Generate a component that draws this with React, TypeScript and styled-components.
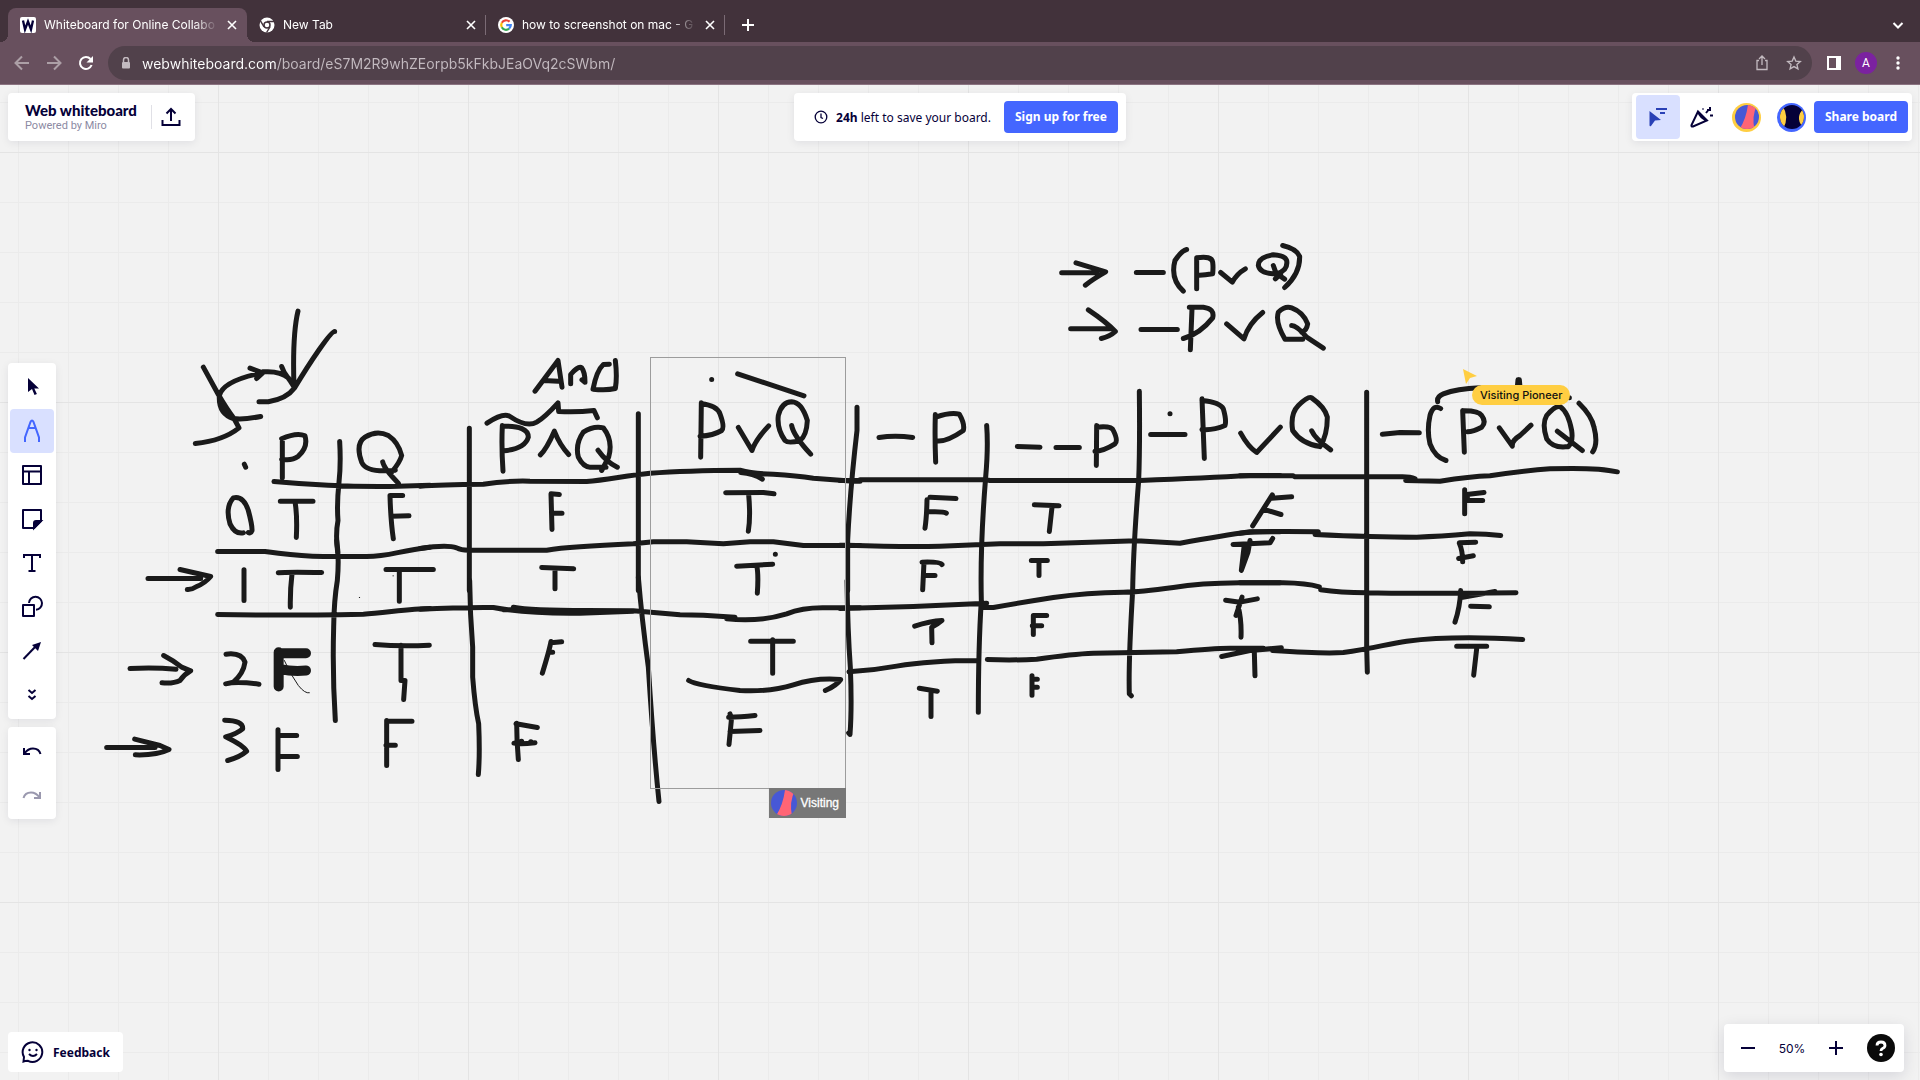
import React from "react";
import styled, { createGlobalStyle, css } from "styled-components";

const color = {
  strip: "#42323b",
  chrome: "#68505e",
  field: "#51414b",
  ink: "#1a1a1a",
  navy: "#050038",
  blue: "#4466ff",
  pale: "#d9e0ff",
};
const ui = `"Noto Sans", "Open Sans", sans-serif`;
const system = `Inter, Roboto, sans-serif`;

const GlobalStyle = createGlobalStyle`
  * { box-sizing: border-box; }
  body { margin: 0; font-family: ${ui}; color: ${color.navy}; }
  button, input { font: inherit; color: inherit; border: 0; padding: 0; margin: 0; background: none; }
  button { cursor: pointer; }
  svg { display: block; flex: none; }
`;

const Page = styled.div`
  display: flex;
  flex-direction: column;
  min-height: 100vh;
`;

/* ---------- Browser chrome ---------- */

const TabStrip = styled.nav`
  display: flex;
  align-items: flex-end;
  height: 42px;
  padding: 0 12px 0 8px;
  background: ${color.strip};
  color: #fff;
  font: 12px ${system};
`;

const Tab = styled.div<{ $active?: boolean; $divided?: boolean }>`
  position: relative;
  display: flex;
  align-items: center;
  width: 239px;
  height: 34px;
  padding: 0 9px 0 12px;
  border-radius: 8px 8px 0 0;
  ${(p) =>
    p.$active &&
    css`
      background: ${color.chrome};
      &::before,
      &::after {
        content: "";
        position: absolute;
        bottom: 0;
        width: 8px;
        height: 8px;
      }
      &::before {
        left: -8px;
        background: radial-gradient(circle at 0 0, transparent 8px, ${color.chrome} 8px);
      }
      &::after {
        right: -8px;
        background: radial-gradient(circle at 100% 0, transparent 8px, ${color.chrome} 8px);
      }
    `}
  ${(p) =>
    p.$divided &&
    css`
      &::after {
        content: "";
        position: absolute;
        right: 0;
        top: 7px;
        width: 1px;
        height: 20px;
        background: #7b6b75;
      }
    `}
`;

const TabTitle = styled.button`
  display: flex;
  flex: 1;
  align-items: center;
  gap: 8px;
  min-width: 0;
  text-align: left;
  span {
    flex: 1;
    overflow: hidden;
    white-space: nowrap;
    line-height: 20px;
    mask-image: linear-gradient(to right, #000 calc(100% - 24px), transparent);
  }
`;

const Plain = styled.button`
  display: grid;
  place-items: center;
  flex: none;
`;

const Close = styled(Plain)`
  width: 12px;
  height: 12px;
  margin-left: 8px;
`;

const NewTab = styled(Plain)`
  width: 28px;
  height: 34px;
  margin-left: 9px;
`;

const TabMenu = styled(Plain)`
  width: 20px;
  height: 34px;
  margin-left: auto;
`;

const AddressBar = styled.div`
  display: flex;
  align-items: center;
  height: 43px;
  padding: 0 6px;
  background: ${color.chrome};
  border-bottom: 1px solid #8b7381;
  color: #fff;
`;

const NavButton = styled(Plain)<{ $dim?: boolean }>`
  width: 32px;
  height: 32px;
  opacity: ${(p) => (p.$dim ? 0.45 : 1)};
`;

const Field = styled.label`
  display: flex;
  align-items: center;
  flex: 1;
  height: 34px;
  margin: 0 6px;
  padding: 0 2px 0 12px;
  border-radius: 17px;
  background: ${color.field};
`;

const Url = styled.input`
  flex: 1;
  height: 24px;
  margin-left: 10px;
  outline: 0;
  font: 14px ${system};
  color: transparent;
  background: linear-gradient(to right, #fff 134px, #c3bac0 134px);
  background-clip: text;
  -webkit-background-clip: text;
`;

const Profile = styled.button`
  width: 22px;
  height: 22px;
  margin: 0 5px;
  border-radius: 50%;
  background: #7b22a0;
  color: #fff;
  font: 12px/22px Roboto, sans-serif;
`;

/* ---------- Board ---------- */

const Board = styled.main`
  position: relative;
  display: flex;
  flex-direction: column;
  flex: 1;
  padding: 8px;
  overflow: hidden;
  background-color: #f2f2f2;
  background-image: linear-gradient(to right, #e4e4e4 1px, transparent 1px),
    linear-gradient(to bottom, #e4e4e4 1px, transparent 1px),
    linear-gradient(to right, #ebebeb 1px, transparent 1px),
    linear-gradient(to bottom, #ebebeb 1px, transparent 1px);
  background-size: 250px 250px, 250px 250px, 50px 50px, 50px 50px;
  background-position: 218px 0, 0 67px, 18px 0, 0 17px;
`;

const Ink = styled.svg`
  position: absolute;
  inset: 0;
  width: 100%;
  height: 100%;
  fill: none;
  stroke: ${color.ink};
  stroke-linecap: round;
  stroke-linejoin: round;
`;

const Frame = styled.section`
  position: absolute;
  left: 650px;
  top: 272px;
  width: 196px;
  height: 432px;
  border: 1px solid #9c9c9c;
`;

const FrameOwner = styled.div`
  position: absolute;
  right: -1px;
  top: 100%;
  display: flex;
  align-items: center;
  gap: 4px;
  height: 30px;
  padding: 0 7px 0 2px;
  background: #777;
  color: #fff;
  font: 12px "Liberation Sans", Arial, sans-serif;
  -webkit-text-stroke: 0.3px #fff;
`;

const Guest = styled.div`
  position: absolute;
  left: 1463px;
  top: 284px;
`;

const GuestName = styled.span`
  display: block;
  margin-left: 9px;
  padding: 0 8px;
  border-radius: 10px;
  background: #ffce42;
  color: #111;
  font: 500 11px/20px ${system};
  white-space: nowrap;
`;

const TopRow = styled.header`
  position: relative;
  display: grid;
  grid-template-columns: 1fr auto 1fr;
`;

const Panel = styled.div`
  display: flex;
  align-items: center;
  height: 48px;
  border-radius: 4px;
  background: #fff;
  box-shadow: 0 2px 8px rgba(5, 0, 56, 0.08);
`;

const BrandPanel = styled(Panel)`
  justify-self: start;
  padding: 0 12px 0 17px;
`;

const Brand = styled.h1`
  margin: 0 14px 0 0;
  font: 900 15px/18px Lato, sans-serif;
  small {
    display: block;
    font: 11px/14px Roboto, sans-serif;
    color: #8c8aa3;
  }
`;

const Export = styled(Plain)`
  width: 32px;
  height: 24px;
  padding-left: 7px;
  border-left: 1px solid #e0e0e6;
`;

const Notice = styled(Panel)`
  padding: 0 8px 0 20px;
  font-size: 12px;
  p {
    margin: 0 13px 0 8px;
  }
`;

const Primary = styled.button`
  height: 32px;
  padding: 0 11px;
  border-radius: 4px;
  background: ${color.blue};
  color: #fff;
  font: 700 12px/32px ${ui};
  white-space: nowrap;
`;

const PeoplePanel = styled(Panel)`
  justify-self: end;
  padding: 0 4px;
`;

const Tool = styled(Plain)<{ $on?: boolean; $dim?: boolean }>`
  width: 44px;
  height: 44px;
  border-radius: 4px;
  background: ${(p) => (p.$on ? color.pale : "transparent")};
  opacity: ${(p) => (p.$dim ? 0.4 : 1)};
`;

const Rail = styled.aside`
  position: relative;
  display: flex;
  flex: 1;
  flex-direction: column;
  align-items: flex-start;
  justify-content: center;
  gap: 8px;
  padding-top: 16px;
`;

const ToolPanel = styled(Panel)`
  flex-direction: column;
  height: auto;
  padding: 2px;
`;

const BottomRow = styled.footer`
  position: relative;
  display: flex;
  align-items: flex-end;
  justify-content: space-between;
`;

const Feedback = styled.button`
  display: flex;
  align-items: center;
  gap: 8px;
  height: 40px;
  padding: 0 13px;
  border-radius: 4px;
  background: #fff;
  font: 700 12px ${ui};
`;

const ZoomPanel = styled(Panel)`
  margin-right: 8px;
  padding: 0 9px 0 2px;
  box-shadow: 0 4px 16px rgba(5, 0, 56, 0.12);
`;

const Level = styled.output`
  width: 44px;
  text-align: center;
  font: 12px ${system};
`;

const Help = styled(Plain)`
  margin-left: 9px;
`;

/* ---------- Icons ---------- */

type IconProps = { size?: number; box?: string; children: React.ReactNode; width?: number; stroke?: string };
const Icon = ({ size = 24, box = "0 0 24 24", width = 2, stroke = "currentColor", children }: IconProps) => (
  <svg width={size} height={size} viewBox={box} fill="none" stroke={stroke} strokeWidth={width} aria-hidden="true">
    {children}
  </svg>
);

const CloseIcon = () => (
  <Icon size={12} box="0 0 12 12" width={1.6}>
    <path d="M2 2l8 8M10 2l-8 8" />
  </Icon>
);

const WFavicon = () => (
  <svg width="16" height="16" viewBox="0 0 16 16" aria-hidden="true">
    <rect width="16" height="16" rx="2" fill="#fff" />
    <path d="M3 3.500L5 12.500L8 4.500L11 12.500L13 3.500" fill="none" stroke={color.navy} strokeWidth="2.300" />
  </svg>
);

const ChromeFavicon = () => (
  <svg width="16" height="16" viewBox="0 0 16 16" aria-hidden="true">
    <circle cx="8" cy="8" r="7.500" fill="#fff" />
    <circle cx="8" cy="8" r="3" fill="#fff" stroke={color.strip} strokeWidth="1.500" />
    <path d="M8 4.500h7M5 9.800L1.500 3.800M11 9.800L7.600 15.500" stroke={color.strip} strokeWidth="1.400" />
  </svg>
);

const GoogleFavicon = () => (
  <svg width="16" height="16" viewBox="0 0 16 16" fill="none" strokeWidth="2.200" aria-hidden="true">
    <circle cx="8" cy="8" r="8" fill="#fff" />
    <path d="M11.500 4.800A4.800 4.800 0 0 0 3.800 5.700" stroke="#ea4335" />
    <path d="M3.800 5.700A4.800 4.800 0 0 0 3.800 10.300" stroke="#fbbc05" />
    <path d="M3.800 10.300A4.800 4.800 0 0 0 11.100 11.700" stroke="#34a853" />
    <path d="M11.100 11.700A4.800 4.800 0 0 0 12.800 8.100H8.200" stroke="#4285f4" />
  </svg>
);

const VisitorFace = ({ size }: { size: number }) => (
  <svg width={size} height={size} viewBox="0 0 26 26" aria-hidden="true">
    <clipPath id={`face${size}`}>
      <circle cx="13" cy="13" r="13" />
    </clipPath>
    <g clipPath={`url(#face${size})`}>
      <path fill="#4758d6" d="M0 0h26v26H0z" />
      <path fill="#ff6575" d="M14 0h10Q18 12 21 26H5Q12 15 14 0z" />
    </g>
  </svg>
);

const OwnerFace = () => (
  <svg width="24" height="24" viewBox="0 0 24 24" aria-hidden="true">
    <clipPath id="owner">
      <circle cx="12" cy="12" r="12" />
    </clipPath>
    <g clipPath="url(#owner)">
      <path fill="#050038" d="M0 0h24v24H0z" />
      <path fill="#ffce42" d="M0 0h2Q10 12 3 24H0zM24 3Q15 12 22 21h2z" />
    </g>
  </svg>
);

const Ring = styled.button<{ $ring: string }>`
  display: grid;
  place-items: center;
  width: 29px;
  height: 29px;
  margin: 0 8px;
  border-radius: 50%;
  background: ${(p) => p.$ring};
`;

const tools = [
  {
    label: "Select",
    art: <path d="M8 3v14l4-3 2.500 6 2.400-1-2.600-5.500h4.700z" fill="currentColor" stroke="none" />,
  },
  {
    label: "Pen",
    on: true,
    art: <path d="M5 23v-4.500L10.500 3Q12 0 13.500 3L19 18.500V23M8.500 9h7" stroke={color.blue} />,
  },
  { label: "Templates", art: <path d="M3 3h18v18H3zM3 8.500h18M9 8.500V21" strokeLinejoin="round" /> },
  {
    label: "Sticky note",
    art: (
      <>
        <path d="M3 3h18v11l-7 7H3z" strokeLinejoin="round" />
        <path d="M21 14h-5q-2 0-2 2v5z" fill="currentColor" />
      </>
    ),
  },
  { label: "Text", art: <path d="M4 7V4h16v3M12 4v16M8.500 20h7" /> },
  {
    label: "Shapes",
    art: (
      <>
        <path d="M3 10h11v11H3z" strokeLinejoin="round" />
        <path d="M9 8a6.500 6.500 0 1 1 7 6.800" />
      </>
    ),
  },
  {
    label: "Connection line",
    art: (
      <>
        <path d="M3.500 20L16 7" />
        <path d="M21 3l-3 9-6-6z" fill="currentColor" stroke="none" />
      </>
    ),
  },
  { label: "More", art: <path d="M8.500 7l3.500 3 3.500-3M8.500 13l3.500 3 3.500-3" /> },
];

/* ---------- Hand-drawn strokes, three units to one board pixel ---------- */

const sketches = [
  {
    name: "Turning arrows and the P and Q headings",
    at: [90, 290],
    d: `M624 62C610 120 609 200 612 290M734 123C722 123 660 215 614 292M575 228Q580 245 594 262L614 290
      M340 230L385 312Q410 355 432 384L447 412Q400 450 316 459M480 233L518 247L500 264
      M518 247Q400 270 388 315Q385 370 430 384Q460 388 512 378M518 244Q570 240 595 262L614 292Q590 325 535 334H507
      M463 521L467 530M577 447V562M575 445Q620 425 645 436Q655 470 625 497Q605 512 575 506
      M749 453Q753 520 747 575Q740 640 744 690Q736 730 743 785
      M916 539Q830 548 815 515Q795 460 825 440Q860 418 895 435Q925 455 935 495Q930 515 905 545M878 514Q882 535 925 578
      M552 573Q740 590 900 588L1020 584
      M460 727Q435 732 420 700Q405 650 430 622Q460 615 475 660Q487 705 486 720Q482 730 475 726
      M571 632H669M616 640Q622 680 619 741M900 615H938M900 615Q902 690 910 745M905 677L957 676`,
  },
  {
    name: "Row numbers and the first two columns",
    at: [90, 540],
    d: `M174 114H332M270 87L362 108Q345 128 320 138Q305 148 292 147M462 88V180M565 97Q585 94 695 96M606 100Q600 150 601 200
      M383 33H525C600 42 620 47 700 48H830C900 48 920 32 1020 20M740 0Q748 50 742 120Q732 180 731 260Q727 400 736 540
      M888 87H1030M928 92V182M383 222Q560 226 820 221C880 218 960 204 1020 204
      M120 384Q190 380 258 386M221 345Q250 360 275 380L302 391Q285 400 270 420Q250 430 216 427
      M408 341Q455 335 465 365Q460 400 430 425L407 430Q440 422 507 431
      M855 312Q930 318 1018 314M933 314V420L945 420L941 477M50 621H195M134 596L210 615L237 627Q200 645 136 643
      M404 539Q460 540 458 565Q440 580 407 589Q460 615 470 632Q450 650 413 660
      M564 568V687M564 585H620M564 648H622M890 540V675M890 542H966M888 614H916`,
  },
  {
    name: "AND and OR headings",
    at: [420, 340],
    d: `M345 152L414 60L426 140M370 120L415 122M452 130V102Q475 75 485 82Q495 95 495 125L486 118M568 71L550 72Q530 90 519 146Q560 150 586 144Q592 110 586 60
      M201 248Q250 215 270 228Q320 262 350 245Q375 230 414 187L416 213Q470 216 522 210L532 232
      M247 255Q244 320 249 392M247 257Q325 255 325 290Q315 325 252 331M361 343Q380 325 403 272Q420 315 446 342
      M545 390L566 350Q580 300 550 262Q520 255 490 275Q465 310 475 350Q490 380 510 380H558M534 329Q560 365 592 380
      M875 117h.1M953 100L1152 166M844 187L842 350M844 190Q890 195 900 220Q915 260 905 270Q880 285 840 287
      M955 261L996 330Q1005 300 1046 256M1140 300Q1105 310 1095 300Q1070 265 1075 225Q1085 185 1115 184Q1145 185 1162 240Q1160 285 1140 300M1115 255Q1120 285 1172 341
      M148 263V750M655 220V750M0 437Q60 432 190 431Q260 420 330 422L500 423C560 418 620 405 690 398Q800 390 960 389Q1000 400 1060 401Q1130 405 1180 413L1300 422H1320M962 396Q1000 398 1027 416
      M0 624Q80 612 110 622Q125 630 150 629H380Q450 618 640 610L700 604H800L910 610L990 604H1060L1150 615H1320
      M393 460L396 567M393 460L418 462M398 518H426M917 457L1030 456L1062 460M986 462Q992 530 985 572
      M365 681L461 685M405 686V745M950 677L1058 671M1010 675Q1016 700 1012 758M1066 641h.1
      M1311 200V270Q1290 450 1283 600V750`,
  },
  {
    name: "Lower AND and OR cells",
    at: [420, 580],
    d: `M149 0Q150 100 158 200V290Q165 380 176 430Q180 520 175 582M655 -10Q665 110 685 260Q700 500 717 663
      M1281 0Q1283 150 1291 260Q1296 380 1290 462L1286 457M0 86Q120 80 220 81Q320 100 480 98L640 92
      M250 88H310M280 80Q330 90 500 90L640 91L780 103L850 104L945 110M920 115Q1020 125 1100 100Q1150 80 1220 82H1320
      M393 183Q388 210 367 278M393 187L425 184M390 215h8M290 428Q290 480 295 537M288 430L352 441M282 488Q300 492 345 487M304 482h1M332 484h1
      M992 182H1120M1058 178V278M806 300Q830 315 960 330Q1050 335 1120 313Q1190 290 1262 297Q1250 315 1216 330
      M930 400L934 420L927 492M926 410Q960 410 1005 405M930 453L1020 450`,
  },
  {
    name: "Negated P columns",
    at: [840, 380],
    d: `M117 171Q165 163 218 171M286 102Q284 170 287 245M288 110Q330 95 358 101Q375 130 370 150Q320 185 290 181
      M440 135Q445 200 437 290Q420 500 424 660Q415 800 415 995M532 198L600 200M648 201H718
      M770 135L769 255M770 140Q815 135 820 150Q835 180 825 190Q790 212 765 212
      M898 32Q900 200 896 300Q880 500 878 630Q865 850 868 940L874 946
      M990 100h.1M932 162H1035M1086 55L1093 234M1086 60Q1140 65 1150 85Q1160 120 1155 135Q1120 150 1086 147M1202 158Q1225 200 1250 216L1321 140
      M0 300H55L60 298H440L450 300H900Q1100 292 1230 285H1320M0 494H20Q200 500 300 497L480 490H610L890 481L1020 488Q1150 465 1230 454H1320
      M0 684Q150 680 220 678L440 668M424 681H460Q550 665 640 651Q740 636 850 635Q900 635 1000 621Q1080 608 1200 607H1320
      M27 874Q100 870 170 857Q270 840 415 840M442 837Q520 840 590 836Q700 820 760 818L1010 814Q1120 803 1170 803H1270
      M261 358Q260 410 255 443M270 350L348 354M265 394Q310 392 319 398M583 373L657 376M636 380L628 453
      M252 545L248 628M246 545Q300 543 306 552M252 585H285M574 540H622M597 542V585
      M224 737Q270 722 306 720Q295 730 275 740L276 787M580 705V762M580 705H620M577 736H605
      M238 923L292 932M273 935V1008M576 886V944M580 896h12M580 920h12
      M1179 492L1290 487L1298 474M1230 480L1224 515L1204 570L1212 500M1157 659L1200 665L1252 655M1206 650L1188 705M1195 680Q1205 720 1203 770
      M1145 828L1230 810L1324 802M1243 815L1245 886`,
  },
  {
    name: "Negated disjunction columns",
    at: [1240, 360],
    d: `M240 258Q185 250 158 210Q150 160 175 135Q205 105 215 112Q255 140 262 170Q262 225 240 258M215 211Q225 235 272 268
      M380 95V860L382 935M427 221L480 216L538 217M602 144Q580 130 570 165Q560 210 570 250Q585 290 618 300
      M668 150L673 275M668 151Q715 150 725 165Q740 185 725 200Q700 213 682 214M778 202L817 257Q815 240 840 225L873 194
      M985 258Q940 265 920 235Q905 190 920 165Q945 135 960 138Q985 155 995 210Q1000 245 985 258M952 212L1027 270
      M1017 128Q1055 165 1062 200Q1075 250 1058 274M593 124Q590 108 610 100Q650 85 720 82M834 58L832 80M838 58L840 80M988 112h.1
      M0 346H160L165 349H480Q510 348 525 355M497 360L600 362Q690 348 750 346Q850 330 930 325Q1070 320 1132 334
      M0 518Q80 510 235 514M225 522Q400 530 530 530Q600 528 690 520Q740 520 782 525
      M0 667H130Q200 668 238 679M242 688Q300 697 380 697Q500 700 828 697
      M98 870Q250 880 310 876C400 865 440 850 500 842Q640 825 848 837
      M97 403L38 496M95 413L155 409M70 446L123 462M674 388V460M680 402L732 396M678 420H728M682 402V418
      M658 548Q668 570 668 604M658 547L707 545M656 594L700 586M662 690Q660 740 645 785M664 711L765 693M692 737L748 739
      M650 857H740M710 865L701 944`,
  },
  {
    name: "Two formulas",
    at: [1040, 230],
    d: `M65 127H170M108 97L197 124Q160 145 136 164M289 126H370M440 57Q425 60 405 90Q390 145 430 182
      M470 175V82Q515 75 518 95Q520 110 518 130Q490 135 472 134M542 126L577 155Q590 130 616 115
      M740 90Q735 75 700 73Q655 80 655 105Q660 130 710 130Q745 120 740 90M700 105L708 128L734 146M706 145L722 130M728 45Q770 55 779 78Q780 130 734 171
      M92 295H212M145 238Q200 275 226 303Q210 318 184 324M303 297H412M456 235L451 358M448 230H490Q525 235 518 262Q480 310 430 324
      M560 280L612 325Q625 280 668 246M788 326H735Q705 275 715 245Q735 225 755 232Q790 245 803 280Q800 300 785 305M755 285Q770 285 800 320L850 353`,
  },
];

const BrowserTab = ({ icon, title, active, divided }: { icon: React.ReactNode; title: string; active?: boolean; divided?: boolean }) => (
  <Tab $active={active} $divided={divided}>
    <TabTitle>
      {icon}
      <span>{title}</span>
    </TabTitle>
    <Close aria-label={`Close ${title}`}>
      <CloseIcon />
    </Close>
  </Tab>
);

export default function App() {
  return (
    <Page>
      <GlobalStyle />
      <TabStrip>
        <BrowserTab icon={<WFavicon />} title="Whiteboard for Online Collabo" active />
        <BrowserTab icon={<ChromeFavicon />} title="New Tab" divided />
        <BrowserTab icon={<GoogleFavicon />} title="how to screenshot on mac - G" divided />
        <NewTab aria-label="New tab">
          <Icon size={14} box="0 0 14 14">
            <path d="M7 1v12M1 7h12" />
          </Icon>
        </NewTab>
        <TabMenu aria-label="Search tabs">
          <Icon size={12} box="0 0 12 12">
            <path d="M1.500 4L6 8.500 10.500 4" />
          </Icon>
        </TabMenu>
      </TabStrip>
      <AddressBar>
        <NavButton aria-label="Back" $dim>
          <Icon size={16} box="0 0 16 16">
            <path d="M15 8H2M8 1.500L1.500 8 8 14.500" />
          </Icon>
        </NavButton>
        <NavButton aria-label="Forward" $dim>
          <Icon size={16} box="0 0 16 16">
            <path d="M1 8h13M8 1.500L14.500 8 8 14.500" />
          </Icon>
        </NavButton>
        <NavButton aria-label="Reload">
          <Icon size={16} box="0 0 16 16">
            <path d="M13.600 10A6 6 0 1 1 12.500 4" />
            <path d="M15 1v6.500H8.500z" fill="currentColor" stroke="none" />
          </Icon>
        </NavButton>
        <Field aria-label="Address">
          <Icon size={12} box="0 0 12 12" stroke="#c3bac0" width={1.5}>
            <path d="M3.500 5V3a2.500 2.500 0 0 1 5 0v2" />
            <rect x="2" y="5" width="8" height="6.500" rx="1" fill="#c3bac0" stroke="none" />
          </Icon>
          <Url defaultValue="webwhiteboard.com/board/eS7M2R9whZEorpb5kFkbJEaOVq2cSWbm/" />
          <NavButton aria-label="Share page">
            <Icon size={16} box="0 0 16 16" stroke="#c3bac0" width={1.3}>
              <path d="M5 5.500H3v9h10v-9h-2M8 10V1.500M5 4l3-3 3 3" />
            </Icon>
          </NavButton>
          <NavButton aria-label="Bookmark">
            <Icon size={16} box="0 0 24 24" stroke="#c3bac0">
              <path d="M12 3l2.700 6.200 6.800.6-5.100 4.500 1.500 6.600-5.900-3.500-5.900 3.500 1.500-6.600-5.100-4.500 6.800-.6z" />
            </Icon>
          </NavButton>
        </Field>
        <NavButton aria-label="Side panel">
          <Icon size={14} box="0 0 14 14">
            <path d="M1 1h12v12H1z" />
            <path d="M9 0h5v14H9z" fill="currentColor" stroke="none" />
          </Icon>
        </NavButton>
        <Profile>A</Profile>
        <NavButton aria-label="Menu">
          <Icon size={16} box="0 0 16 16">
            <g fill="currentColor" stroke="none">
              <circle cx="8" cy="3" r="1.700" />
              <circle cx="8" cy="8" r="1.700" />
              <circle cx="8" cy="13" r="1.700" />
            </g>
          </Icon>
        </NavButton>
      </AddressBar>

      <Board>
        <Ink aria-label="Handwritten truth table">
          <g transform="translate(0 -84.5)">
            {sketches.map((s) => (
              <g key={s.name} transform={`translate(${s.at[0]} ${s.at[1]}) scale(0.33333)`}>
                <path d={s.d} strokeWidth="15" />
              </g>
            ))}
            <g transform="translate(90 540) scale(0.33333)">
              <path d="M566 438V335M570 338H648M570 386Q610 394 648 390" strokeWidth="30" />
              <path d="M583 360Q600 400 625 435Q645 460 658 457M808 171h1M909 106h1" strokeWidth="3" />
            </g>
          </g>
        </Ink>
        <Frame aria-label="Selected strokes">
          <FrameOwner>
            <VisitorFace size={26} />
            Visiting
          </FrameOwner>
        </Frame>
        <Guest>
          <svg width="14" height="16" viewBox="0 0 14 16" aria-hidden="true">
            <path d="M0 0l14 7-7 2-4 6z" fill="#ffce42" />
          </svg>
          <GuestName>Visiting Pioneer</GuestName>
        </Guest>

        <TopRow>
          <BrandPanel>
            <Brand>
              Web whiteboard
              <small>Powered by Miro</small>
            </Brand>
            <Export aria-label="Export">
              <Icon size={20} box="0 0 20 20">
                <path d="M1.500 13v5h17v-5M10 14V2.500M5.500 6.500L10 2l4.500 4.500" />
              </Icon>
            </Export>
          </BrandPanel>
          <Notice>
            <Icon size={14} box="0 0 14 14" width={1.3}>
              <circle cx="7" cy="7" r="5.800" />
              <path d="M7 3.500V7.500l2 1" />
            </Icon>
            <p>
              <b>24h</b> left to save your board.
            </p>
            <Primary>Sign up for free</Primary>
          </Notice>
          <PeoplePanel>
            <Tool $on aria-label="Collaborator cursors">
              <Icon stroke="#2a41b6">
                <path d="M3.500 6l11.500 9-6 .5L5 21Q3.500 22 3.500 20z" fill="#2a41b6" stroke="none" />
                <path d="M10 4h11M14 8h5" />
              </Icon>
            </Tool>
            <Tool aria-label="Reactions">
              <Icon>
                <path d="M8 6.500L1.500 20Q1 22 3 21.500L17 15.500zM8 6.500Q10 13 17 15.500M13 3.500v1M16 8l2-2.500M20 2v3h-3M20 10.500h3" />
              </Icon>
            </Tool>
            <Ring $ring="#ffce42" aria-label="Visiting Pioneer">
              <VisitorFace size={24} />
            </Ring>
            <Ring $ring={color.blue} aria-label="You">
              <OwnerFace />
            </Ring>
            <Primary>Share board</Primary>
          </PeoplePanel>
        </TopRow>

        <Rail aria-label="Tools">
          <ToolPanel>
            {tools.map((t) => (
              <Tool key={t.label} $on={t.on} aria-label={t.label}>
                <Icon>{t.art}</Icon>
              </Tool>
            ))}
          </ToolPanel>
          <ToolPanel>
            <Tool aria-label="Undo">
              <Icon>
                <path d="M4 9v6h6M4.500 14.500Q8 9.500 13 9.500 19 9.500 20.500 15" />
              </Icon>
            </Tool>
            <Tool aria-label="Redo" $dim>
              <Icon>
                <path d="M20 9v6h-6M19.500 14.500Q16 9.500 11 9.500 5 9.500 3.500 15" />
              </Icon>
            </Tool>
          </ToolPanel>
        </Rail>

        <BottomRow>
          <Feedback>
            <Icon>
              <path d="M4 21l-1.500.5L3 17A9.800 9.800 0 1 1 7 20.800L4 21z" />
              <path d="M8 14q4 4 8 0" />
              <circle cx="8.500" cy="10" r="1.200" fill="currentColor" stroke="none" />
              <circle cx="15.500" cy="10" r="1.200" fill="currentColor" stroke="none" />
            </Icon>
            Feedback
          </Feedback>
          <ZoomPanel>
            <Tool aria-label="Zoom out">
              <Icon size={14} box="0 0 14 14">
                <path d="M0 7h14" />
              </Icon>
            </Tool>
            <Level>50%</Level>
            <Tool aria-label="Zoom in">
              <Icon size={14} box="0 0 14 14">
                <path d="M0 7h14M7 0v14" />
              </Icon>
            </Tool>
            <Help aria-label="Help">
              <Icon size={28} box="0 0 28 28">
                <circle cx="14" cy="14" r="14" fill="#0a0a0a" stroke="none" />
                <path d="M10 11.500Q10 8 14 8t4 3.500Q18 13.500 15.500 14.500 14 15.200 14 17" stroke="#fff" strokeWidth="2.800" />
                <circle cx="14" cy="20.500" r="1.800" fill="#fff" stroke="none" />
              </Icon>
            </Help>
          </ZoomPanel>
        </BottomRow>
      </Board>
    </Page>
  );
}
